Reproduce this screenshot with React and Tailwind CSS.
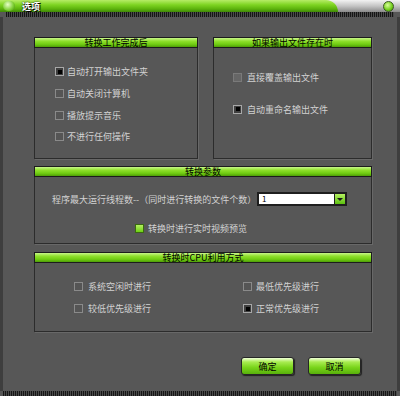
import React from 'react';

function Header({ title }) {
    return (
        <div className="h-[11px] border border-[#1c1c1c] bg-[linear-gradient(#c8f58a,#8fe02c_35%,#70cc12_70%,#4f9e08)] flex items-center justify-center text-[9px] leading-none text-black">
            {title}
        </div>
    );
}

function Check({ state = 'off', label, gap = 'gap-[4px]' }) {
    let box;
    if (state === 'on') {
        box = (
            <div className="w-[9px] h-[9px] border border-[#a8a8a8] bg-[#3e3e3e] flex items-center justify-center">
                <div className="w-[4px] h-[4px] bg-black" />
            </div>
        );
    } else if (state === 'disabled') {
        box = <div className="w-[9px] h-[9px] border border-[#7a7a7a] bg-[#666]" />;
    } else if (state === 'green') {
        box = <div className="w-[9px] h-[9px] border border-[#3a6a10] bg-[linear-gradient(#b4f060,#6ed014)]" />;
    } else {
        box = <div className="w-[9px] h-[9px] border border-[#8a8a8a] bg-[#555]" />;
    }
    return (
        <div className={`flex items-center ${gap}`}>
            {box}
            <span className="text-[9px] leading-none text-[#d2d2d2]">{label}</span>
        </div>
    );
}

function Group({ title, className, children }) {
    return (
        <div className={`flex flex-col shadow-[1px_1px_0_#686868] ${className}`}>
            <Header title={title} />
            <div className="flex-1 border-x border-b border-[#2c2c2c]">{children}</div>
        </div>
    );
}

export default function App() {
    return (
        <div className="w-[400px] h-[396px] flex flex-col bg-[#575757] font-['Noto_Sans_CJK_SC','Noto_Sans',sans-serif] overflow-hidden">
            {/* title bar */}
            <div className="h-[12px] flex bg-[linear-gradient(#f2f2f2,#c4c4c4_50%,#8a8a8a)]">
                <div className="w-[338px] rounded-tr-[14px] bg-[linear-gradient(#b6ec66,#7ed422_40%,#5cb20c_75%,#3f8806)] flex items-center pl-[3px] gap-[7px]">
                    <div className="w-[12px] h-[10px] rounded-full bg-[radial-gradient(circle_at_40%_35%,#e8ffc8,#7acc30_60%,#3d7a10)]" />
                    <span className="text-[9px] leading-none font-bold text-white [text-shadow:0_0_2px_#000,1px_1px_0_#000]">选项</span>
                </div>
                <div className="flex-1 flex items-center justify-end pr-[6px]">
                    <div className="w-[11px] h-[11px] rounded-full border border-[#3a5a20] bg-[radial-gradient(circle_at_40%_35%,#d8ff9a,#70cc18_60%,#3a7a08)]" />
                </div>
            </div>
            <div className="h-[5px] mx-[6px] bg-[repeating-linear-gradient(90deg,#161616_0px,#161616_1px,#4a4a4a_1px,#4a4a4a_2px)]" />

            {/* body */}
            <div className="flex-1 border-x-[3px] border-[#3e3e3e] pl-[31px] pr-[25px] pt-[20px] flex flex-col">
                <div className="flex gap-[15px] h-[122px]">
                    <Group title="转换工作完成后" className="w-[164px]">
                        <div className="flex flex-col pl-[20px] pt-[13px]">
                            <div className="h-[21.7px] flex items-center"><Check state="on" label="自动打开输出文件夹" gap="gap-[3px]" /></div>
                            <div className="h-[21.7px] flex items-center"><Check label="自动关闭计算机" gap="gap-[3px]" /></div>
                            <div className="h-[21.7px] flex items-center"><Check label="播放提示音乐" gap="gap-[3px]" /></div>
                            <div className="h-[21.7px] flex items-center"><Check label="不进行任何操作" gap="gap-[3px]" /></div>
                        </div>
                    </Group>
                    <Group title="如果输出文件存在时" className="w-[159px]">
                        <div className="flex flex-col pl-[19px] pt-[22px] gap-[18px]">
                            <div className="h-[14px] flex items-center"><Check state="disabled" label="直接覆盖输出文件" gap="gap-[5px]" /></div>
                            <div className="h-[14px] flex items-center"><Check state="on" label="自动重命名输出文件" gap="gap-[5px]" /></div>
                        </div>
                    </Group>
                </div>

                <Group title="转换参数" className="mt-[7px] h-[78px]">
                    <div className="flex items-center pl-[17px] pt-[15px]">
                        <span className="w-[205px] text-[9px] leading-none text-[#d2d2d2]">程序最大运行线程数--（同时进行转换的文件个数）</span>
                        <div className="w-[90px] h-[14px] bg-[#1e1e1e] p-[2px] flex gap-[1px]">
                            <div className="flex-1 bg-white flex items-center pl-[3px] text-[8px] leading-none text-black">1</div>
                            <div className="w-[10px] bg-[linear-gradient(#b4f060,#5cc010)] flex items-center justify-center">
                                <div className="w-0 h-0 border-x-[3px] border-x-transparent border-t-[3px] border-t-[#1a1a1a]" />
                            </div>
                        </div>
                    </div>
                    <div className="flex pl-[100px] pt-[18px]">
                        <Check state="green" label="转换时进行实时视频预览" gap="gap-[4px]" />
                    </div>
                </Group>

                <Group title="转换时CPU利用方式" className="mt-[8px] h-[80px]">
                    <div className="grid grid-cols-[169px_1fr] pl-[39px] pt-[17px] gap-y-[9px]">
                        <div className="h-[13px] flex items-center"><Check label="系统空闲时进行" gap="gap-[5px]" /></div>
                        <div className="h-[13px] flex items-center"><Check label="最低优先级进行" gap="gap-[4px]" /></div>
                        <div className="h-[13px] flex items-center"><Check label="较低优先级进行" gap="gap-[5px]" /></div>
                        <div className="h-[13px] flex items-center"><Check state="on" label="正常优先级进行" gap="gap-[4px]" /></div>
                    </div>
                </Group>

                <div className="flex justify-end gap-[14px] mt-[25px] pr-[11px]">
                    <button className="w-[53px] h-[18px] rounded-[3px] border border-[#262626] bg-[linear-gradient(#f0ffd8,#a8ec50_25%,#78d41a_60%,#58b00c)] shadow-[1px_1px_1px_#222] text-[9px] leading-none text-black">确定</button>
                    <button className="w-[53px] h-[18px] rounded-[3px] border border-[#262626] bg-[linear-gradient(#f0ffd8,#a8ec50_25%,#78d41a_60%,#58b00c)] shadow-[1px_1px_1px_#222] text-[9px] leading-none text-black">取消</button>
                </div>
            </div>
            <div className="h-[5px] mx-[3px] bg-[repeating-linear-gradient(90deg,#161616_0px,#161616_1px,#4a4a4a_1px,#4a4a4a_2px)]" />
        </div>
    );
}
